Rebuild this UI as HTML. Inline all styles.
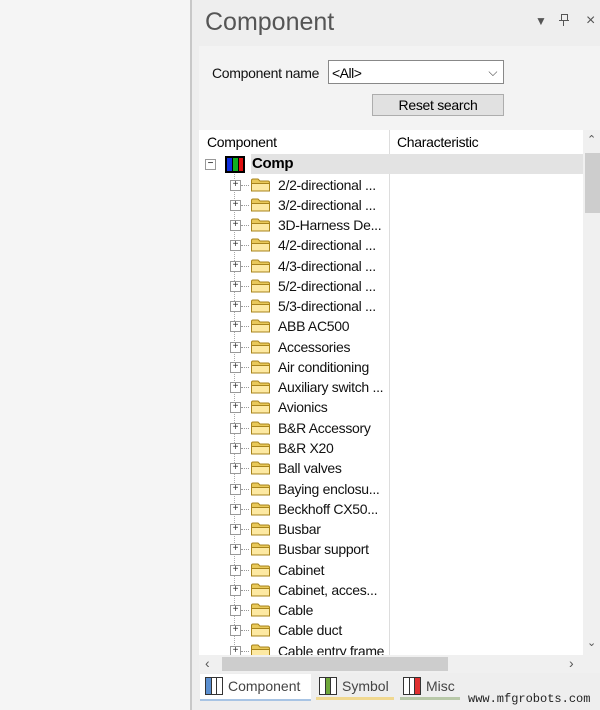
<!DOCTYPE html><html><head><style>
body{margin:0;width:600px;height:710px;background:#f0f0f0;font-family:"Liberation Sans",sans-serif;position:relative;overflow:hidden}
.a{position:absolute}
.row{position:absolute;left:0;height:20px;width:390px;font-size:14px;line-height:20px;color:#111}
.pl{position:absolute;left:230px;top:5px;width:9px;height:9px;border:1px solid #999;background:#fff;font-size:10px;line-height:8px;text-align:center;color:#333}
.fd{position:absolute;left:250px;top:2px;width:21px;height:16px}
.t{position:absolute;left:278px;top:0;letter-spacing:-0.3px}
.dot{position:absolute;left:241px;top:10px;width:8px;border-top:1px dotted #999}
</style></head><body>
<div class="a" style="left:0;top:0;width:190px;height:710px;background:#f5f5f5"></div>
<div class="a" style="left:190px;top:0;width:2px;height:710px;background:#c8c8c8"></div>
<div class="a" style="left:192px;top:0;width:408px;height:710px;background:#eeeeee"></div>
<div class="a" style="left:205px;top:8px;font-size:25px;color:#555">Component</div>
<div class="a" style="left:535px;top:14px;font-size:12px;color:#555">▼</div>
<div class="a" style="left:559px;top:12px;width:10px;height:16px"><div class="a" style="left:2px;top:2px;width:5px;height:6px;border:1px solid #555;border-bottom:none"></div><div class="a" style="left:0;top:8px;width:10px;height:1px;background:#555"></div><div class="a" style="left:4px;top:9px;width:1px;height:5px;background:#555"></div></div>
<div class="a" style="left:586px;top:12px;font-size:16px;color:#555">×</div>
<div class="a" style="left:199px;top:46px;width:401px;height:84px;background:#f3f3f3"></div>
<div class="a" style="left:212px;top:65px;font-size:14px;color:#111;letter-spacing:-0.3px">Component name</div>
<div class="a" style="left:328px;top:60px;width:176px;height:24px;border:1px solid #888;background:#fff;font-size:14px;line-height:24px;box-sizing:border-box;padding-left:3px;letter-spacing:-0.5px">&lt;All&gt;<span style="position:absolute;right:6px;top:-1px;color:#444;font-size:12px">⌵</span></div>
<div class="a" style="left:372px;top:94px;width:132px;height:22px;border:1px solid #adadad;background:#e1e1e1;box-sizing:border-box;font-size:14px;line-height:20px;text-align:center;letter-spacing:-0.3px">Reset search</div>
<div class="a" style="left:199px;top:130px;width:384px;height:525px;background:#fff;overflow:hidden">
<div class="a" style="left:0;top:0;width:384px;height:24px;font-size:14px;line-height:24px;letter-spacing:-0.3px"><span class="a" style="left:8px">Component</span><span class="a" style="left:198px">Characteristic</span></div>
<div class="a" style="left:190px;top:0;width:1px;height:525px;background:#ddd"></div>
<div class="a" style="left:52px;top:24px;width:332px;height:20px;background:#e3e3e3"></div>
<div class="a" style="left:6px;top:29px;width:9px;height:9px;border:1px solid #999;font-size:10px;line-height:8px;text-align:center">−</div>
<div class="a" style="left:26px;top:26px;width:20px;height:17px;background:#000"><div class="a" style="left:2px;top:2px;width:5px;height:13px;background:#1030e0"></div><div class="a" style="left:8px;top:2px;width:5px;height:13px;background:#10b020"></div><div class="a" style="left:14px;top:2px;width:4px;height:13px;background:#e01010"></div></div>
<div class="a" style="left:53px;top:24px;font-size:15px;line-height:20px;font-weight:bold;letter-spacing:-0.3px">Comp</div>
<div class="a" style="left:35px;top:44px;height:481px;border-left:1px dotted #aaa"></div>
</div>
<div id="rows" class="a" style="left:0;top:0"></div>
<div class="a" style="left:583px;top:130px;width:17px;height:525px;background:#f0f0f0"></div>
<div class="a" style="left:585px;top:153px;width:15px;height:60px;background:#cdcdcd"></div>
<div class="a" style="left:587px;top:133px;font-size:11px;color:#555">⌃</div>
<div class="a" style="left:587px;top:636px;font-size:11px;color:#555">⌄</div>
<div class="a" style="left:199px;top:655px;width:401px;height:18px;background:#f0f0f0"></div>
<div class="a" style="left:222px;top:657px;width:226px;height:14px;background:#cdcdcd"></div>
<div class="a" style="left:205px;top:655px;font-size:14px;color:#555">‹</div>
<div class="a" style="left:569px;top:655px;font-size:14px;color:#555">›</div>
<div class="a" style="left:200px;top:674px;width:111px;height:25px;background:#fff;border-bottom:2px solid #a8c4e4"></div>
<div class="a" style="left:205px;top:677px;width:18px;height:18px;border:1px solid #333;box-sizing:border-box;background:linear-gradient(90deg,#5b8fd0 0 5px,#333 5px 6px,#fff 6px 10px,#333 10px 11px,#fff 11px)"></div>
<div class="a" style="left:228px;top:678px;font-size:14px;color:#444">Component</div>
<div class="a" style="left:316px;top:697px;width:78px;height:3px;background:#f0d890"></div>
<div class="a" style="left:319px;top:677px;width:18px;height:18px;border:1px solid #333;box-sizing:border-box;background:linear-gradient(90deg,#fff 0 5px,#333 5px 6px,#6fa83a 6px 10px,#333 10px 11px,#fff 11px)"></div>
<div class="a" style="left:342px;top:678px;font-size:14px;color:#444">Symbol</div>
<div class="a" style="left:400px;top:697px;width:60px;height:3px;background:#b8c8a8"></div>
<div class="a" style="left:403px;top:677px;width:18px;height:18px;border:1px solid #333;box-sizing:border-box;background:linear-gradient(90deg,#fff 0 5px,#333 5px 6px,#fff 6px 10px,#333 10px 11px,#e03030 11px)"></div>
<div class="a" style="left:426px;top:678px;font-size:14px;color:#444">Misc</div>
<div class="a" style="left:468px;top:692px;font-family:'Liberation Mono',monospace;font-size:12px;color:#222">www.mfgrobots.com</div>
<script>
var n=["2/2-directional ...","3/2-directional ...","3D-Harness De...","4/2-directional ...","4/3-directional ...","5/2-directional ...","5/3-directional ...","ABB AC500","Accessories","Air conditioning","Auxiliary switch ...","Avionics","B&amp;R Accessory","B&amp;R X20","Ball valves","Baying enclosu...","Beckhoff CX50...","Busbar","Busbar support","Cabinet","Cabinet, acces...","Cable","Cable duct","Cable entry frame"];
var h="";var f='<svg class="fd" viewBox="0 0 21 16"><path d="M1.5 3.5a1.5 1.5 0 0 1 1.5-1.5h5l2 2h8a1.5 1.5 0 0 1 1.5 1.5v8.5H1.5z" fill="#e9c95a" stroke="#a8841c"/><path d="M1.5 6.5h18v7.5H1.5z" fill="#fde9a2" stroke="#a8841c"/></svg>';
for(var i=0;i<n.length;i++){var y=174.5+i*20.27;if(y>655)break;h+='<div class="row" style="top:'+y+'px;clip-path:inset(0 0 '+Math.max(0,y+20-655)+'px 0)"><div class="pl">+</div><div class="dot"></div>'+f+'<div class="t">'+n[i]+'</div></div>';}
document.getElementById('rows').innerHTML=h;
</script>
</body></html>
